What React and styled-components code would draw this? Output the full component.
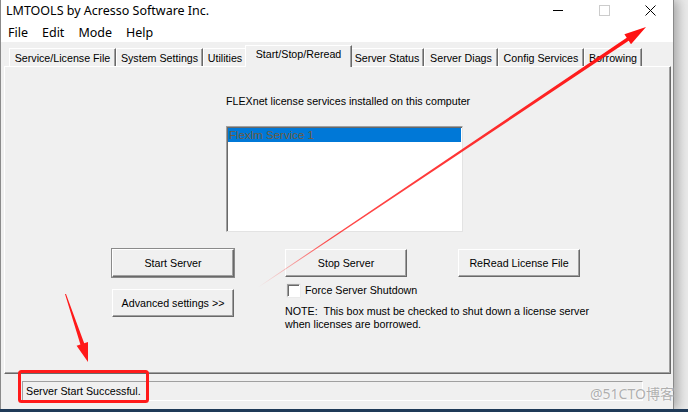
import React from "react";
import styled, { createGlobalStyle } from "styled-components";

const GlobalStyle = createGlobalStyle`
  html, body {
    margin: 0;
    padding: 0;
  }
  body {
    width: 688px;
    height: 412px;
    overflow: hidden;
    background: #e4e4e4;
  }
`;

const Desktop = styled.div`
  position: relative;
  width: 688px;
  height: 412px;
  display: flex;
  flex-direction: column;
  background: linear-gradient(to right, #d4d4d4 0%, #e9e9e9 100%);
  font-family: "Liberation Sans", Arial, sans-serif;
  font-size: 10.7px;
  color: #000;
  overflow: hidden;
`;

const Window = styled.div`
  box-sizing: border-box;
  width: 674px;
  height: 409px;
  display: flex;
  flex-direction: column;
  background: #f0f0f0;
  border-left: 1px solid #8a8a8a;
  border-right: 1px solid #8a8a8a;
  box-shadow: 4px 0 10px rgba(0, 0, 0, 0.28);
`;

const Taskbar = styled.div`
  height: 3px;
  background: #1f3a58;
`;

const TitleBar = styled.div`
  height: 22px;
  display: flex;
  align-items: center;
  background: #fff;
`;

const Title = styled.div`
  padding-left: 5px;
  font-family: "Noto Sans", "Liberation Sans", sans-serif;
  font-size: 12.5px;
  line-height: 20px;
`;

const Controls = styled.div`
  margin-left: auto;
  display: flex;
  height: 22px;
`;

const CtrlButton = styled.div`
  width: 46px;
  height: 20px;
  display: flex;
  align-items: center;
  justify-content: center;
`;

const MenuBar = styled.div`
  height: 20px;
  display: flex;
  align-items: center;
  background: #fff;
  font-family: "Noto Sans", "Liberation Sans", sans-serif;
  font-size: 12.5px;
`;

const MenuItem = styled.span`
  padding: 0 7px;
  line-height: 20px;
  margin-top: 2px;
`;

const Client = styled.div`
  flex: 1;
  display: flex;
  flex-direction: column;
  padding: 0 2px 0 3px;
`;

const TabStrip = styled.div`
  height: 24px;
  display: flex;
  align-items: flex-end;
  padding-left: 5px;
  position: relative;
  z-index: 2;
`;

const Tab = styled.div`
  box-sizing: border-box;
  width: ${({ $w, $active }) => ($active ? $w + 4 : $w)}px;
  height: ${({ $active }) => ($active ? 22 : 18)}px;
  margin: ${({ $active }) => ($active ? "0 -2px -1px -2px" : "0")};
  background: #f0f0f0;
  border-top: 1px solid #fff;
  border-left: 1px solid #fff;
  border-right: 1px solid #696969;
  box-shadow: inset -1px 0 0 #a0a0a0;
  display: flex;
  align-items: ${({ $active }) => ($active ? "flex-start" : "center")};
  justify-content: center;
  padding-top: ${({ $active }) => ($active ? "2px" : "0")};
  white-space: nowrap;
  position: relative;
  z-index: ${({ $active }) => ($active ? 3 : 1)};
`;

const Panel = styled.div`
  box-sizing: border-box;
  height: 308px;
  background: #f0f0f0;
  border-top: 1px solid #fff;
  border-left: 1px solid #fff;
  border-right: 1px solid #696969;
  border-bottom: 1px solid #696969;
  box-shadow: inset -1px -1px 0 #a0a0a0;
  padding-top: 27px;
  display: flex;
  flex-direction: column;
`;

const ServiceBlock = styled.div`
  margin-left: 221px;
  display: flex;
  flex-direction: column;
`;

const Heading = styled.div`
  line-height: 14px;
  white-space: nowrap;
`;

const ListBox = styled.div`
  box-sizing: border-box;
  margin-top: 18px;
  width: 237px;
  height: 106px;
  background: #fff;
  border-top: 1px solid #a0a0a0;
  border-left: 1px solid #a0a0a0;
  border-right: 1px solid #e3e3e3;
  border-bottom: 1px solid #e3e3e3;
  box-shadow: inset 1px 1px 0 #696969;
  padding: 1px 1px 0 1px;
`;

const ListRow = styled.div`
  height: 14px;
  line-height: 14px;
  padding-left: 1px;
  font-size: 11.5px;
  background: ${({ $selected }) => ($selected ? "#0078d7" : "transparent")};
  color: ${({ $selected }) => ($selected ? "#6f5c3f" : "#000")};
`;

const ButtonGrid = styled.div`
  margin: 17px 0 0 107px;
  display: grid;
  grid-template-columns: 122px 122px 122px;
  column-gap: 51px;
  row-gap: 7px;
  align-items: start;
`;

const Button = styled.div`
  box-sizing: border-box;
  width: 122px;
  height: 28px;
  margin-top: ${({ $top }) => $top || 0}px;
  display: flex;
  align-items: center;
  justify-content: center;
  background: #f0f0f0;
  border-top: 1px solid #fff;
  border-left: 1px solid #fff;
  border-right: 1px solid #696969;
  border-bottom: 1px solid #696969;
  box-shadow: ${({ $default }) =>
    $default
      ? "inset -1px -1px 0 #a0a0a0, 0 0 0 1px #8a8a8a"
      : "inset -1px -1px 0 #a0a0a0"};
  white-space: nowrap;
`;

const ShutdownBox = styled.div`
  grid-column: 2 / span 2;
  display: flex;
  flex-direction: column;
`;

const CheckRow = styled.label`
  display: flex;
  align-items: center;
  gap: 5px;
  padding-left: 2px;
  line-height: 13px;
`;

const CheckBox = styled.span`
  box-sizing: border-box;
  width: 13px;
  height: 13px;
  background: #fff;
  border-top: 1px solid #a0a0a0;
  border-left: 1px solid #a0a0a0;
  border-right: 1px solid #fff;
  border-bottom: 1px solid #fff;
  box-shadow: inset 1px 1px 0 #696969, 0 0 0 0.5px #e3e3e3;
`;

const Note = styled.div`
  margin-top: 8px;
  line-height: 13px;
  white-space: pre;
`;

const StatusArea = styled.div`
  flex: 1;
  padding: 7px 28px 0 18px;
`;

const StatusField = styled.div`
  box-sizing: border-box;
  height: 20px;
  display: flex;
  align-items: center;
  padding-left: 3px;
  border-top: 1px solid #a0a0a0;
  border-left: 1px solid #a0a0a0;
  border-right: 1px solid #fff;
  border-bottom: 1px solid #fff;
`;

const Overlay = styled.svg`
  position: absolute;
  left: 0;
  top: 0;
  pointer-events: none;
  z-index: 10;
`;

const Watermark = styled.div`
  position: absolute;
  left: 590px;
  top: 383px;
  font-family: "Noto Sans", "Noto Sans CJK SC", sans-serif;
  font-size: 14px;
  color: rgba(150, 150, 150, 0.75);
  text-shadow: 0 0 2px #fff;
  pointer-events: none;
  z-index: 11;
  white-space: nowrap;
`;

const tabs = [
  { label: "Service/License File", w: 107 },
  { label: "System Settings", w: 87 },
  { label: "Utilities", w: 44 },
  { label: "Start/Stop/Reread", w: 103, active: true },
  { label: "Server Status", w: 74 },
  { label: "Server Diags", w: 74 },
  { label: "Config Services", w: 86 },
  { label: "Borrowing", w: 58 },
];

const Annotations = () => (
  <Overlay width="688" height="412" viewBox="0 0 688 412">
    <defs>
      <linearGradient
        id="fade"
        x1="258"
        y1="287"
        x2="646"
        y2="27"
        gradientUnits="userSpaceOnUse"
      >
        <stop offset="0" stopColor="#ff2020" stopOpacity="0" />
        <stop offset="0.18" stopColor="#ff2020" stopOpacity="0.8" />
        <stop offset="1" stopColor="#ff1010" stopOpacity="1" />
      </linearGradient>
    </defs>
    <polygon
      points="258,287 626.7,37.8 624.4,34.3 646,27 631,44.3 628.7,40.8 258.4,287.5"
      fill="url(#fade)"
    />
    <polygon
      points="65,294 80.4,344.5 76.6,345.8 88,362 88,342 84.2,343.3 66,294"
      fill="#ff1a1a"
    />
    <rect
      x="19.5"
      y="371.5"
      width="128"
      height="30"
      rx="2"
      fill="none"
      stroke="#ff1a1a"
      strokeWidth="3"
    />
  </Overlay>
);

const App = () => {
  return (
    <>
      <GlobalStyle />
      <Desktop>
        <Window>
          <TitleBar>
            <Title>LMTOOLS by Acresso Software Inc.</Title>
            <Controls>
              <CtrlButton>
                <svg width="10" height="10" viewBox="0 0 10 10">
                  <path d="M0 5.5 H10" stroke="#000" strokeWidth="1" />
                </svg>
              </CtrlButton>
              <CtrlButton>
                <svg width="11" height="11" viewBox="0 0 11 11">
                  <rect
                    x="0.5"
                    y="0.5"
                    width="10"
                    height="10"
                    fill="none"
                    stroke="#cccccc"
                  />
                </svg>
              </CtrlButton>
              <CtrlButton>
                <svg width="11" height="11" viewBox="0 0 11 11">
                  <path
                    d="M0.5 0.5 L10.5 10.5 M10.5 0.5 L0.5 10.5"
                    stroke="#000"
                    strokeWidth="1"
                  />
                </svg>
              </CtrlButton>
            </Controls>
          </TitleBar>
          <MenuBar>
            <MenuItem>File</MenuItem>
            <MenuItem>Edit</MenuItem>
            <MenuItem>Mode</MenuItem>
            <MenuItem>Help</MenuItem>
          </MenuBar>
          <Client>
            <TabStrip>
              {tabs.map((t) => (
                <Tab key={t.label} $w={t.w} $active={t.active}>
                  {t.label}
                </Tab>
              ))}
            </TabStrip>
            <Panel>
              <ServiceBlock>
                <Heading>FLEXnet license services installed on this computer</Heading>
                <ListBox>
                  <ListRow $selected>Flexlm Service 1</ListRow>
                </ListBox>
              </ServiceBlock>
              <ButtonGrid>
                <Button $default>Start Server</Button>
                <Button>Stop Server</Button>
                <Button>ReRead License File</Button>
                <Button $top={5}>Advanced settings &gt;&gt;</Button>
                <ShutdownBox>
                  <CheckRow>
                    <CheckBox />
                    Force Server Shutdown
                  </CheckRow>
                  <Note>
                    {"NOTE:  This box must be checked to shut down a license server\nwhen licenses are borrowed."}
                  </Note>
                </ShutdownBox>
              </ButtonGrid>
            </Panel>
            <StatusArea>
              <StatusField>Server Start Successful.</StatusField>
            </StatusArea>
          </Client>
        </Window>
        <Taskbar />
        <Annotations />
        <Watermark>@51CTO博客</Watermark>
      </Desktop>
    </>
  );
};

export default App;
